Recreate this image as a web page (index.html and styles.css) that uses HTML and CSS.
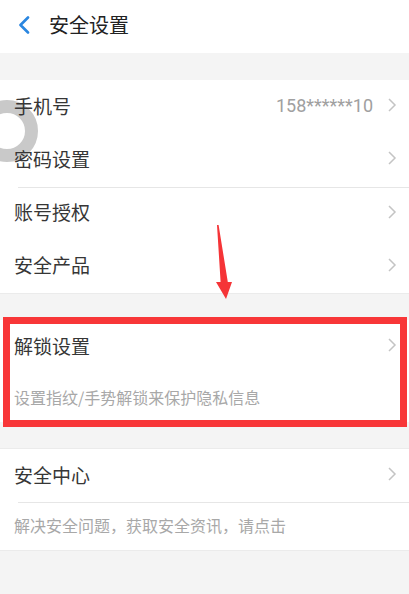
FILE: index.html
```html
<!DOCTYPE html>
<html lang="zh-CN">
<head>
<meta charset="utf-8">
<title>安全设置</title>
<link rel="stylesheet" href="styles.css">
</head>
<body>
<div class="page">
  <header class="header">
    <svg class="back" width="14" height="18" viewBox="0 0 14 18"><path d="M11 1.5 L3.5 9 L11 16.5" fill="none" stroke="#2a86e0" stroke-width="2.6" stroke-linecap="round" stroke-linejoin="round"/></svg>
    <h1 class="title">安全设置</h1>
  </header>

  <section class="group group-first">
    <div class="row">
      <span class="label">手机号</span>
      <span class="value">158******10</span>
      <svg class="chev" width="10" height="16" viewBox="0 0 10 16"><path d="M2 2 L8 8 L2 14" fill="none" stroke="#c4c4c4" stroke-width="1.5"/></svg>
    </div>
    <div class="row">
      <span class="label">密码设置</span>
      <svg class="chev" width="10" height="16" viewBox="0 0 10 16"><path d="M2 2 L8 8 L2 14" fill="none" stroke="#c4c4c4" stroke-width="1.5"/></svg>
    </div>
    <div class="row row-line">
      <span class="label">账号授权</span>
      <svg class="chev" width="10" height="16" viewBox="0 0 10 16"><path d="M2 2 L8 8 L2 14" fill="none" stroke="#c4c4c4" stroke-width="1.5"/></svg>
    </div>
    <div class="row">
      <span class="label">安全产品</span>
      <svg class="chev" width="10" height="16" viewBox="0 0 10 16"><path d="M2 2 L8 8 L2 14" fill="none" stroke="#c4c4c4" stroke-width="1.5"/></svg>
    </div>
  </section>

  <section class="group group-unlock">
    <div class="row row-main">
      <span class="label">解锁设置</span>
      <svg class="chev" width="10" height="16" viewBox="0 0 10 16"><path d="M2 2 L8 8 L2 14" fill="none" stroke="#c4c4c4" stroke-width="1.5"/></svg>
    </div>
    <div class="sub">设置指纹/手势解锁来保护隐私信息</div>
    <div class="highlight"></div>
  </section>

  <section class="group group-center">
    <div class="row row-main">
      <span class="label">安全中心</span>
      <svg class="chev" width="10" height="16" viewBox="0 0 10 16"><path d="M2 2 L8 8 L2 14" fill="none" stroke="#c4c4c4" stroke-width="1.5"/></svg>
    </div>
    <div class="sub sub-line">解决安全问题，获取安全资讯，请点击</div>
  </section>

  <div class="float-ball"></div>
  <svg class="arrow" width="20" height="78" viewBox="0 0 20 78"><path d="M1 0 L2.6 0 L11.8 57 L16 57 L10 74 L0 57 L4.6 57 Z" fill="#f53437"/></svg>
</div>
</body>
</html>
```

FILE: styles.css
```css
* { box-sizing: border-box; margin: 0; padding: 0; }
html, body { background: #f4f4f4; }
body {
  font-family: "Noto Sans CJK SC", "Noto Sans", Roboto, sans-serif;
  color: #333;
}
.page {
  position: relative;
  width: 409px;
  height: 594px;
  overflow: hidden;
  background: #f4f4f4;
}
.header {
  height: 53px;
  background: #fff;
  display: flex;
  align-items: center;
  padding-left: 17px;
  padding-bottom: 3px;
}
.back { display: block; }
.title {
  font-size: 20px;
  font-weight: normal;
  color: #222;
  margin-left: 18px;
  line-height: 1;
}
.group {
  background: #fff;
  position: relative;
}
.group-first { margin-top: 27px; border-bottom: 1px solid #ebebeb; }
.group-unlock { margin-top: 26px; height: 102px; }
.group-center { margin-top: 26px; border-top: 1px solid #ebebeb; border-bottom: 1px solid #ebebeb; }
.row {
  height: 53.25px;
  display: flex;
  align-items: center;
  padding: 0 12px 3px 14px;
  position: relative;
}
.row-line::before {
  content: "";
  position: absolute;
  left: 18px; right: 0; top: 0;
  border-top: 1px solid #e6e6e6;
}
.label {
  font-size: 19px;
  line-height: 1;
  flex: 1;
  color: #363636;
  position: relative;
  z-index: 2;
}
.value {
  font-family: Roboto, "Noto Sans", sans-serif;
  font-size: 18px;
  color: #a0a0a0;
  margin-right: 14px;
}
.chev { display: block; }
.row-main { height: 53px; }
.sub {
  height: 48px;
  display: flex;
  align-items: center;
  padding-left: 14px;
  padding-bottom: 2px;
  font-size: 16px;
  color: #a8a8a8;
  position: relative;
}
.group-unlock .sub { height: 49px; }
.sub-line::before {
  content: "";
  position: absolute;
  left: 18px; right: 0; top: 0;
  border-top: 1px solid #e6e6e6;
}
.highlight {
  position: absolute;
  left: 3px;
  right: 2px;
  top: -3px;
  bottom: -5px;
  border: 7px solid #f83638;
}
.float-ball {
  position: absolute;
  z-index: 1;
  left: -24px;
  top: 100px;
  width: 62px;
  height: 62px;
  border-radius: 50%;
  border: 13px solid #c9c9c9;
}
.arrow {
  position: absolute;
  left: 216px;
  top: 225px;
}
```
